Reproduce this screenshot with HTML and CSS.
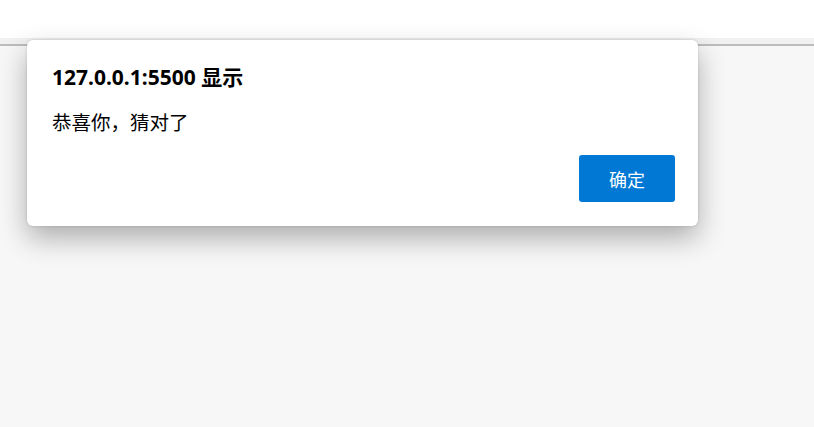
FILE: index.html
```html
<!DOCTYPE html>
<html lang="zh-CN">
<head>
<meta charset="utf-8">
<link rel="stylesheet" href="styles.css">
</head>
<body>
<div class="topbar"></div>
<div class="strip"></div>
<div class="page"></div>
<div class="dialog">
  <div class="title">127.0.0.1:5500 显示</div>
  <div class="message">恭喜你，猜对了</div>
  <div class="actions"><button class="ok">确定</button></div>
</div>
</body>
</html>
```
FILE: styles.css
```css
html, body { margin: 0; padding: 0; height: 100%; }
body {
  display: flex;
  flex-direction: column;
  background: #f7f7f7;
  font-family: "Noto Sans", "Noto Sans CJK SC", sans-serif;
  color: #000;
  overflow: hidden;
}
.topbar { height: 38px; background: #fff; }
.strip { height: 6px; background: #f1f1f1; border-bottom: 2px solid #bdbdbd; }
.page { flex: 1; background: #f7f7f7; }
.dialog {
  position: absolute;
  left: 27px;
  top: 40px;
  width: 671px;
  height: 186px;
  box-sizing: border-box;
  background: #fff;
  border-radius: 6px;
  padding: 23px 23px 0 25px;
  box-shadow: 0 12px 28px rgba(0,0,0,0.3), 0 0 3px rgba(0,0,0,0.15);
  display: flex;
  flex-direction: column;
}
.title {
  font-size: 21px;
  font-weight: 700;
  line-height: 28px;
  height: 28px;
  white-space: nowrap;
}
.message {
  margin-top: 17px;
  font-size: 19.5px;
  line-height: 28px;
  font-family: "Noto Sans CJK SC", sans-serif;
}
.actions {
  display: flex;
  justify-content: flex-end;
  margin-top: 19px;
}
.ok {
  width: 96px;
  height: 47px;
  border: none;
  border-radius: 3px;
  background: #0078d4;
  color: #fff;
  font-size: 18px;
  font-family: "Noto Sans CJK SC", sans-serif;
  padding: 0;
}
```
